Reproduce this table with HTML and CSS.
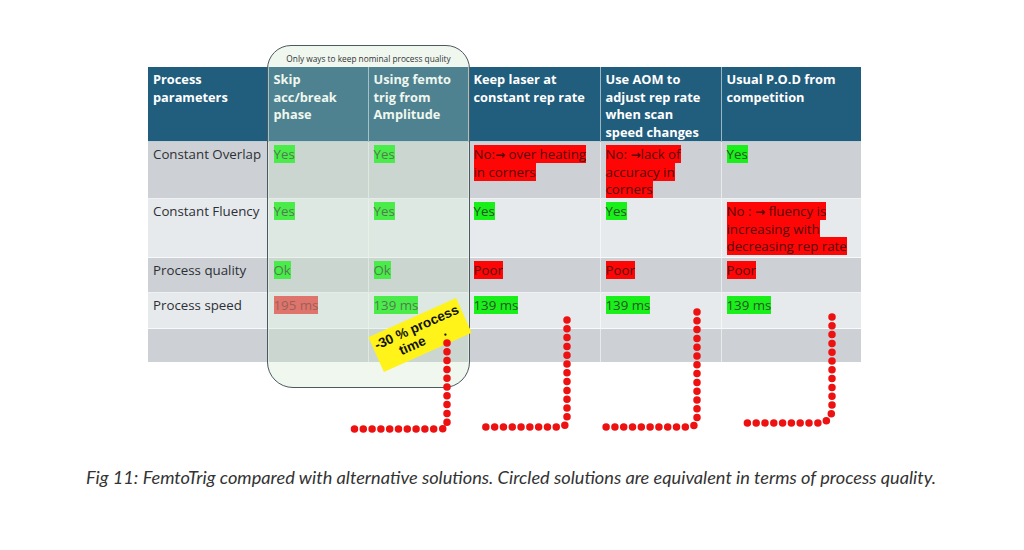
FILE: index.html
```html
<!DOCTYPE html>
<html>
<head>
<meta charset="utf-8">
<link rel="stylesheet" href="styles.css">
</head>
<body>
<div class="page">
  <div class="figure">
    <table class="cmp">
      <colgroup>
        <col class="c1"><col class="c2"><col class="c3"><col class="c4"><col class="c5"><col class="c6">
      </colgroup>
      <thead>
        <tr class="r-head">
          <th>Process<br>parameters</th>
          <th>Skip<br>acc/break<br>phase</th>
          <th>Using femto<br>trig from<br>Amplitude</th>
          <th>Keep laser at<br>constant rep rate</th>
          <th>Use AOM to<br>adjust rep rate<br>when scan<br>speed changes</th>
          <th>Usual P.O.D from<br>competition</th>
        </tr>
      </thead>
      <tbody>
        <tr class="r1 gray">
          <td>Constant Overlap</td>
          <td><span class="hl-g">Yes</span></td>
          <td><span class="hl-g">Yes</span></td>
          <td><span class="hl-r">No:<span class="arr">→</span> over heating<br>in corners</span></td>
          <td><span class="hl-r">No: <span class="arr">→</span>lack of<br>accuracy in<br>corners</span></td>
          <td><span class="hl-g">Yes</span></td>
        </tr>
        <tr class="r2 light">
          <td>Constant Fluency</td>
          <td><span class="hl-g">Yes</span></td>
          <td><span class="hl-g">Yes</span></td>
          <td><span class="hl-g">Yes</span></td>
          <td><span class="hl-g">Yes</span></td>
          <td><span class="hl-r">No : <span class="arr">→</span> fluency is<br>increasing with<br>decreasing rep rate</span></td>
        </tr>
        <tr class="r3 gray">
          <td>Process quality</td>
          <td><span class="hl-g">Ok</span></td>
          <td><span class="hl-g">Ok</span></td>
          <td><span class="hl-r">Poor</span></td>
          <td><span class="hl-r">Poor</span></td>
          <td><span class="hl-r">Poor</span></td>
        </tr>
        <tr class="r4 light">
          <td>Process speed</td>
          <td><span class="hl-s">195 ms</span></td>
          <td><span class="hl-g">139 ms</span></td>
          <td><span class="hl-g">139 ms</span></td>
          <td><span class="hl-g">139 ms</span></td>
          <td><span class="hl-g">139 ms</span></td>
        </tr>
        <tr class="r5 gray">
          <td></td><td></td><td></td><td></td><td></td><td></td>
        </tr>
      </tbody>
    </table>
    <div class="circle"><span class="circle-label">Only ways to keep nominal process quality</span></div>
    <div class="sticker">-30 % process<br>time &nbsp;&nbsp;&nbsp;&nbsp;.</div>
    <svg class="dots" width="1024" height="450" viewBox="0 0 1024 450">
      <path d="M447 343 V423 Q447 429 441 429 H352"/>
      <path d="M567 320 V419 Q567 427 559 427 H478"/>
      <path d="M697 312 V418 Q697 427 688 427 H606"/>
      <path d="M832 317 V408 Q832 423 817 423 H740"/>
    </svg>
  </div>
  <p class="caption">Fig 11: FemtoTrig compared with alternative solutions. Circled solutions are equivalent in terms of process quality.</p>
</div>
</body>
</html>
```

FILE: styles.css
```css
html, body {
  margin: 0;
  padding: 0;
  background: #ffffff;
}

.page {
  width: 1024px;
  height: 550px;
  overflow: hidden;
}

.figure {
  position: relative;
  padding: 67px 0 0 148px;
}

.cmp {
  border-collapse: collapse;
  table-layout: fixed;
  width: 713px;
  font-family: "Open Sans", "Liberation Sans", sans-serif;
  font-size: 13.3px;
  line-height: 17px;
}

.c1 { width: 120px; }
.c2 { width: 100px; }
.c3 { width: 100px; }
.c4 { width: 132px; }
.c5 { width: 121px; }
.c6 { width: 140px; }

.cmp th,
.cmp td {
  vertical-align: top;
  text-align: left;
  padding: 4px 0 0 5px;
  white-space: nowrap;
  overflow: visible;
  border-right: 1px solid rgba(255, 255, 255, 0.55);
}

.cmp th {
  background: #215d7d;
  color: #ffffff;
  font-weight: 700;
  font-size: 12.8px;
  line-height: 17.5px;
}

.r-head th { height: 70px; }
.r1 td { height: 52px; }
.r2 td { height: 54px; }
.r3 td { height: 30px; }
.r4 td { height: 31px; }
.r5 td { height: 29px; }

.cmp tbody tr { border-top: 1px solid rgba(255, 255, 255, 0.7); }

.gray td { background: #cdd1d6; }
.light td { background: #e7eaed; }

.cmp td { color: #2c3035; }

.hl-g {
  background: #19f019;
  color: #2a522a;
  box-decoration-break: clone;
  -webkit-box-decoration-break: clone;
}

.hl-r {
  background: #ff0606;
  color: #560a0a;
  box-decoration-break: clone;
  -webkit-box-decoration-break: clone;
}

.arr {
  font-family: "DejaVu Sans", sans-serif;
  font-weight: 700;
  font-size: 12px;
}

.hl-s {
  background: #e84a48;
  color: #8a3030;
}

.circle {
  position: absolute;
  left: 267px;
  top: 45px;
  width: 201px;
  height: 341px;
  border: 1.5px solid #4b5a60;
  border-radius: 24px 24px 26px 26px;
  background: rgba(196, 228, 196, 0.28);
  display: flex;
  justify-content: center;
}

.circle-label {
  margin-top: 7px;
  font-family: "Open Sans", "Liberation Sans", sans-serif;
  font-size: 8.3px;
  line-height: 11px;
  color: #2f3336;
  white-space: nowrap;
}

.sticker {
  position: absolute;
  left: 372px;
  top: 316px;
  width: 96px;
  height: 38px;
  background: #fff31a;
  transform: rotate(-24deg);
  font-family: "Liberation Sans", Arial, sans-serif;
  font-weight: 700;
  font-size: 13.5px;
  line-height: 15px;
  color: #111111;
  text-align: center;
  padding-top: 3px;
  box-sizing: border-box;
  white-space: nowrap;
}

.dots {
  position: absolute;
  left: 0;
  top: 0;
  pointer-events: none;
}

.dots path {
  fill: none;
  stroke: #ee1111;
  stroke-width: 7.5;
  stroke-linecap: round;
  stroke-dasharray: 0 8.8;
}

.caption {
  margin: 103px 0 0 86px;
  font-family: "Lato", "Open Sans", sans-serif;
  font-style: italic;
  font-size: 18.2px;
  line-height: 24px;
  color: #333333;
  white-space: nowrap;
}
```
